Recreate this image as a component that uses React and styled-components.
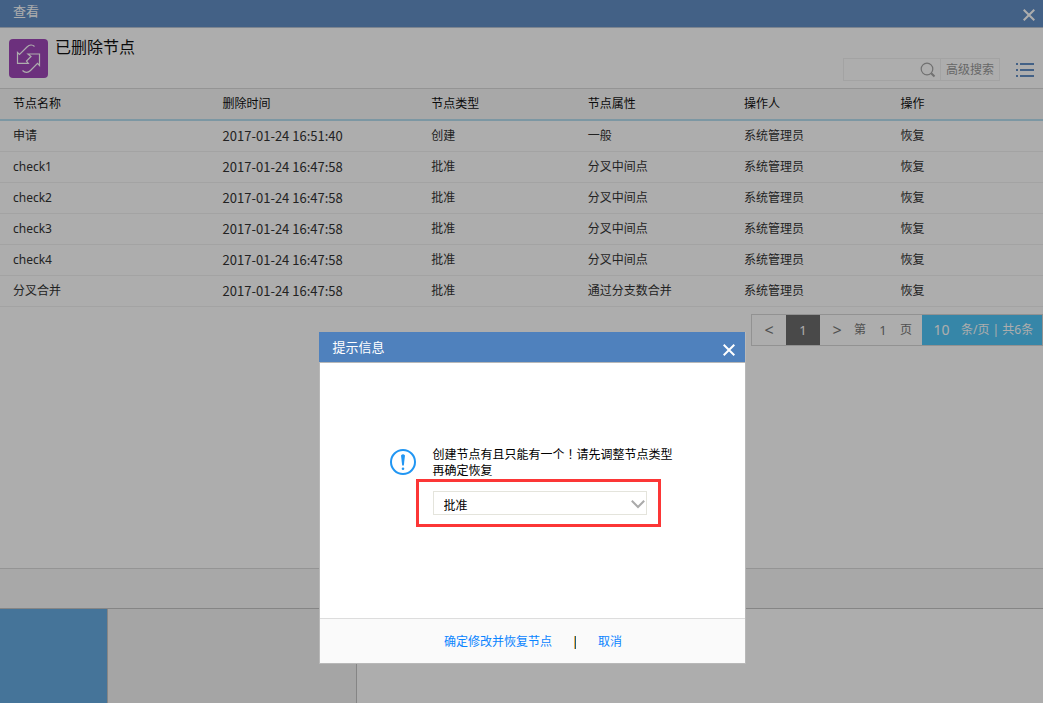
import React from "react";
import styled, { createGlobalStyle } from "styled-components";

const rows = [
    { name: "申请", time: "2017-01-24 16:51:40", type: "创建", attr: "一般" },
    { name: "check1", time: "2017-01-24 16:47:58", type: "批准", attr: "分叉中间点" },
    { name: "check2", time: "2017-01-24 16:47:58", type: "批准", attr: "分叉中间点" },
    { name: "check3", time: "2017-01-24 16:47:58", type: "批准", attr: "分叉中间点" },
    { name: "check4", time: "2017-01-24 16:47:58", type: "批准", attr: "分叉中间点" },
    { name: "分叉合并", time: "2017-01-24 16:47:58", type: "批准", attr: "通过分支数合并" },
];

const CloseIcon = () => (
    <svg width="12" height="12" viewBox="0 0 12 12" fill="none" stroke="currentColor" strokeWidth="2">
        <path d="M0.7 0.7L11.3 11.3M11.3 0.7L0.7 11.3" />
    </svg>
);

const NodeIcon = () => (
    <svg width="39" height="39" viewBox="0 0 39 39" fill="none" stroke="#fff" strokeWidth="1.2" aria-hidden="true">
        <path d="M25.5 7.5C23.5 5.3 20.5 5.5 18 8L10.5 15.5L8.5 13.5V24.3H19.3L17.5 22L22 17.5L19 15H30.5V26.5L28.5 24.3L21.5 31.5C19 34 16 34 13.5 31.5" />
    </svg>
);

const SearchIcon = () => (
    <svg width="16" height="16" viewBox="0 0 16 16" fill="none" stroke="#a6a6a6">
        <circle cx="7" cy="7" r="5.8" strokeWidth="1.2" />
        <path d="M11.2 11.2L14.5 14.5" strokeWidth="2" />
    </svg>
);

const ListIcon = () => (
    <svg width="18" height="14" viewBox="0 0 18 14" fill="#6490c6">
        <path d="M0 0h2v2H0zM4 0h14v2H4zM0 6h2v2H0zM4 6h14v2H4zM0 12h2v2H0zM4 12h14v2H4z" />
    </svg>
);

const InfoIcon = () => (
    <svg width="26" height="26" viewBox="0 0 26 26" fill="none" aria-hidden="true">
        <circle cx="13" cy="13" r="12" stroke="#2196f3" strokeWidth="2" />
        <path d="M11 6.4Q13 4 15 6.4L13.8 16.5h-1.6z" fill="#2196f3" />
        <circle cx="13" cy="19.8" r="1.3" fill="#2196f3" />
    </svg>
);

const ChevronIcon = () => (
    <svg width="14" height="9" viewBox="0 0 14 9" fill="none" stroke="#aaa" strokeWidth="2" aria-hidden="true">
        <path d="M0.8 0.8L7 7L13.2 0.8" />
    </svg>
);

export default function App() {
    return (
        <>
            <GlobalStyle />
            <Page>
                <TitleBar>
                    <span>查看</span>
                    <CloseButton type="button" aria-label="关闭"><CloseIcon /></CloseButton>
                </TitleBar>
                <Header>
                    <Badge><NodeIcon /></Badge>
                    <h1>已删除节点</h1>
                    <Tools>
                        <SearchBox>
                            <input type="text" aria-label="搜索" />
                            <button type="button" aria-label="搜索"><SearchIcon /></button>
                        </SearchBox>
                        <AdvancedButton type="button">高级搜索</AdvancedButton>
                        <MenuButton type="button" aria-label="菜单"><ListIcon /></MenuButton>
                    </Tools>
                </Header>
                <Table>
                    <colgroup>
                        <Col $width="20%" />
                        <Col $width="20%" />
                        <Col $width="15%" />
                        <Col $width="15%" />
                        <Col $width="15%" />
                        <Col $width="15%" />
                    </colgroup>
                    <thead>
                        <tr>
                            <th>节点名称</th>
                            <th>删除时间</th>
                            <th>节点类型</th>
                            <th>节点属性</th>
                            <th>操作人</th>
                            <th>操作</th>
                        </tr>
                    </thead>
                    <tbody>
                        {rows.map((row) => (
                            <tr key={row.name}>
                                <td>{row.name}</td>
                                <TimeCell>{row.time}</TimeCell>
                                <td>{row.type}</td>
                                <td>{row.attr}</td>
                                <td>系统管理员</td>
                                <td><a href="#restore">恢复</a></td>
                            </tr>
                        ))}
                    </tbody>
                </Table>
                <Pager>
                    <PageButton type="button">&lt;</PageButton>
                    <PageButton type="button" $active>1</PageButton>
                    <PageButton type="button">&gt;</PageButton>
                    <PageJump>
                        第
                        <input type="text" defaultValue="1" aria-label="页码" />
                        页
                    </PageJump>
                    <PageSize>
                        <input type="text" defaultValue="10" aria-label="每页条数" />
                        条/页 | 共6条
                    </PageSize>
                </Pager>
                <FooterBar />
                <Workspace>
                    <BlueBlock />
                    <SidePane />
                </Workspace>
            </Page>
            <Overlay>
                <Dialog role="dialog" aria-modal="true" aria-labelledby="dialog-title">
                    <DialogTitle>
                        <h2 id="dialog-title">提示信息</h2>
                        <CloseButton type="button" aria-label="关闭"><CloseIcon /></CloseButton>
                    </DialogTitle>
                    <DialogBody>
                        <InfoIcon />
                        <Message>
                            <label htmlFor="node-type">
                                创建节点有且只能有一个！请先调整节点类型再确定恢复
                            </label>
                            <Highlight>
                                <SelectBox>
                                    <select id="node-type" defaultValue="批准">
                                        <option>批准</option>
                                        <option>创建</option>
                                    </select>
                                    <ChevronIcon />
                                </SelectBox>
                            </Highlight>
                        </Message>
                    </DialogBody>
                    <DialogFooter>
                        <button type="button">确定修改并恢复节点</button>
                        <Divider />
                        <button type="button">取消</button>
                    </DialogFooter>
                </Dialog>
            </Overlay>
        </>
    );
}

const GlobalStyle = createGlobalStyle`
    * {
        box-sizing: border-box;
    }
    body {
        margin: 0;
        background: #fff;
        color: #333;
        font: 12px/16px "Noto Sans", "Noto Sans CJK SC", sans-serif;
    }
    button, input, select {
        margin: 0;
        padding: 0;
        border: 0;
        background: none;
        color: inherit;
        font: inherit;
    }
    svg {
        display: block;
        flex-shrink: 0;
    }
    h1, h2 {
        margin: 0;
        font-weight: 400;
    }
`;

const Page = styled.div`
    display: flex;
    flex-direction: column;
    min-height: 100vh;
`;

const TitleBar = styled.div`
    display: flex;
    justify-content: space-between;
    height: 28px;
    padding: 3px 8px 0 13px;
    border-bottom: 1px solid #b8c4d4;
    background: #6490c6;
    color: #fff;
    font-size: 13px;
    line-height: 17px;
`;

const CloseButton = styled.button`
    display: flex;
    align-items: center;
    height: 24px;
`;

const Header = styled.div`
    display: flex;
    height: 60px;
    padding: 11px 9px 0;
    h1 {
        margin-left: 7px;
        color: #111;
        font-size: 16px;
        line-height: 17px;
    }
`;

const Badge = styled.div`
    width: 39px;
    height: 39px;
    border-radius: 4px;
    background: #a048b8;
`;

const Tools = styled.div`
    display: flex;
    align-items: center;
    height: 23px;
    margin: 19px 0 0 auto;
`;

const SearchBox = styled.div`
    display: flex;
    align-items: center;
    width: 98px;
    height: 23px;
    padding-right: 4px;
    border: 1px solid #f0f0f0;
    input {
        flex: 1;
        min-width: 0;
    }
`;

const AdvancedButton = styled.button`
    height: 23px;
    padding: 0 5px;
    border: 1px solid #f0f0f0;
    border-left: 0;
    color: #999;
`;

const MenuButton = styled.button`
    margin-left: 16px;
`;

const Table = styled.table`
    width: 100%;
    table-layout: fixed;
    border-collapse: separate;
    border-spacing: 0;
    th, td {
        padding: 0 13px;
        text-align: left;
        font-weight: 400;
    }
    th + th, td + td {
        padding-left: 14px;
    }
    th {
        height: 33px;
        border-top: 1px solid #dadada;
        border-bottom: 2px solid #b7dff0;
        background: #f8f8f8;
        color: #111;
    }
    td {
        height: 31px;
        border-bottom: 1px solid #f0f0f0;
    }
    a {
        color: inherit;
        text-decoration: none;
    }
`;

const Col = styled.col`
    width: ${({ $width }) => $width};
`;

const TimeCell = styled.td`
    font-family: "Noto Sans CJK SC", sans-serif;
    font-size: 13px;
`;

const Pager = styled.div`
    display: flex;
    align-self: flex-end;
    height: 32px;
    margin-top: 7px;
    border: 1px solid #d8d8d8;
    color: #777;
`;

const PageButton = styled.button`
    width: 34px;
    background: ${({ $active }) => ($active ? "#6c6c6c" : "none")};
    color: ${({ $active }) => ($active ? "#fff" : "inherit")};
    font-size: ${({ $active }) => ($active ? "13px" : "16px")};
`;

const PageJump = styled.label`
    display: flex;
    align-items: center;
    width: 68px;
    input {
        width: 34px;
        text-align: center;
        font-size: 13px;
    }
`;

const PageSize = styled.label`
    display: flex;
    align-items: center;
    width: 120px;
    background: #50c6f8;
    color: #fff;
    input {
        width: 39px;
        text-align: center;
        font-size: 14px;
    }
`;

const FooterBar = styled.div`
    height: 41px;
    margin-top: auto;
    border-top: 1px solid #dadada;
    border-bottom: 1px solid #c4c4c4;
    background: #f8f8f8;
`;

const Workspace = styled.div`
    display: flex;
    height: 94px;
`;

const BlueBlock = styled.div`
    width: 108px;
    border-right: 1px solid #c4c4c4;
    background: #66abe2;
`;

const SidePane = styled.div`
    width: 249px;
    border-right: 1px solid #c4c4c4;
    background: #f4f4f4;
`;

const Overlay = styled.div`
    position: fixed;
    inset: 0;
    display: flex;
    align-items: flex-end;
    justify-content: center;
    padding: 0 0 39px 21px;
    background: rgba(0, 0, 0, 0.32);
`;

const Dialog = styled.div`
    width: 427px;
    border: 1px solid #b8b8b8;
    border-top: 0;
    background: #fff;
    color: #000;
`;

const DialogTitle = styled.div`
    display: flex;
    justify-content: space-between;
    height: 31px;
    margin-left: -1px;
    padding: 6px 10px 0 14px;
    border-bottom: 1px solid #b8b8b8;
    background: #4f81bd;
    color: #fff;
    h2 {
        font-size: 13px;
        line-height: 18px;
    }
`;

const DialogBody = styled.div`
    display: flex;
    align-items: flex-start;
    height: 255px;
    padding: 86px 70px 0;
`;

const Message = styled.div`
    width: 241px;
    margin: -3px 0 0 17px;
    label {
        display: block;
        font-family: "Noto Sans CJK TC", "Noto Sans CJK SC", sans-serif;
    }
`;

const Highlight = styled.div`
    width: 245px;
    margin: 1px 0 0 -17px;
    padding: 9px 11px 9px 14px;
    border: 3px solid #fc3636;
`;

const SelectBox = styled.div`
    display: flex;
    align-items: center;
    height: 24px;
    border: 1px solid #e4e4dc;
    select {
        flex: 1;
        height: 22px;
        padding: 6px 0 0 10px;
        appearance: none;
        line-height: 16px;
    }
    svg {
        margin: 3px 1px 0 0;
    }
`;

const DialogFooter = styled.div`
    display: flex;
    align-items: center;
    justify-content: center;
    gap: 22px;
    height: 45px;
    padding: 2px 0 0 2px;
    border-top: 1px solid #ddd;
    background: #fafafa;
    color: #0a84ff;
`;

const Divider = styled.span`
    width: 2px;
    height: 13px;
    background: linear-gradient(to right, #f0b050 50%, #206080 50%);
`;
